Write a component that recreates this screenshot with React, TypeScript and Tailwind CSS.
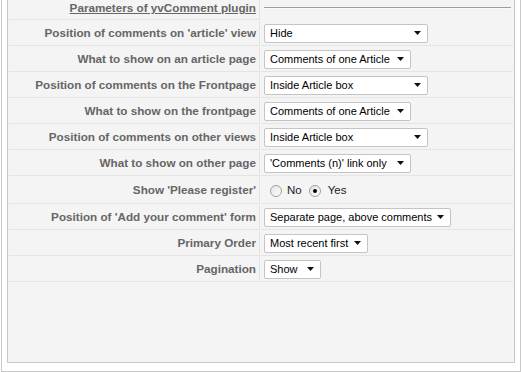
import React from 'react';

type Row =
  | { label: string; kind: 'select'; value: string; width: number }
  | { label: string; kind: 'radio' };

const rows: Row[] = [
  { label: "Position of comments on 'article' view", kind: 'select', value: 'Hide', width: 164 },
  { label: 'What to show on an article page', kind: 'select', value: 'Comments of one Article', width: 147 },
  { label: 'Position of comments on the Frontpage', kind: 'select', value: 'Inside Article box', width: 164 },
  { label: 'What to show on the frontpage', kind: 'select', value: 'Comments of one Article', width: 147 },
  { label: 'Position of comments on other views', kind: 'select', value: 'Inside Article box', width: 164 },
  { label: 'What to show on other page', kind: 'select', value: "'Comments (n)' link only", width: 147 },
  { label: "Show 'Please register'", kind: 'radio' },
  { label: "Position of 'Add your comment' form", kind: 'select', value: 'Separate page, above comments', width: 187 },
  { label: 'Primary Order', kind: 'select', value: 'Most recent first', width: 104 },
  { label: 'Pagination', kind: 'select', value: 'Show', width: 57 },
];

function FakeSelect({ value, width }: { value: string; width: number }) {
  return (
    <div
      className="h-[19px] flex items-center justify-between bg-white border border-[#c4c4c4] rounded-[2px] pl-[5px] pr-[6px] text-[11px] text-black"
      style={{ width }}
    >
      <span className="whitespace-nowrap">{value}</span>
      <svg width="7" height="4" viewBox="0 0 7 4" className="shrink-0">
        <polygon points="0,0 7,0 3.5,4" fill="#111" />
      </svg>
    </div>
  );
}

function Radio({ checked }: { checked?: boolean }) {
  return (
    <span className="w-[12px] h-[12px] rounded-full border border-[#a0a0a0] bg-gradient-to-br from-[#e2e2e2] to-white flex items-center justify-center">
      {checked && <span className="w-[4px] h-[4px] rounded-full bg-black" />}
    </span>
  );
}

export default function App() {
  return (
    <div className="min-h-screen bg-white" style={{ fontFamily: '"Liberation Sans", Arial, sans-serif' }}>
      <div className="ml-[1px] w-[520px] h-[372px] border-x border-b border-[#c8c8c8] px-[5px] pb-[8px]">
        <div className="h-full border-x border-b border-[#c8c8c8] bg-[#f4f4f4] flex flex-col gap-[1px] px-[1px]">
          {/* header */}
          <div className="flex gap-[1px] h-[20px]">
            <div className="w-[251px] border-b border-r border-[#e4e4e4] flex justify-end items-start pr-[3px] pt-[2px]">
              <span className="text-[11.7px] font-bold text-[#666] underline leading-[12px]">
                Parameters of yvComment plugin
              </span>
            </div>
            <div className="flex-1 pl-[3px] pr-[2px] pt-[7px]">
              <div className="border-t border-[#9e9e9e] border-b border-b-[#fafafa]" />
            </div>
          </div>

          {rows.map((r) => (
            <div key={r.label} className={`flex gap-[1px] ${r.kind === 'radio' ? 'h-[27px]' : 'h-[25px]'}`}>
              <div className="w-[251px] border-b border-r border-[#e4e4e4] flex items-center justify-end pr-[3px]">
                <span className="text-[11.7px] font-bold text-[#666] whitespace-nowrap">{r.label}</span>
              </div>
              <div className="flex-1 border-b border-[#e4e4e4] flex items-center pl-[3px]">
                {r.kind === 'select' ? (
                  <FakeSelect value={r.value} width={r.width} />
                ) : (
                  <div className="flex items-center text-[11.5px] text-[#222] pl-[6px] pt-[2px]">
                    <Radio />
                    <span className="ml-[5px]">No</span>
                    <span className="ml-[7px]">
                      <Radio checked />
                    </span>
                    <span className="ml-[7px]">Yes</span>
                  </div>
                )}
              </div>
            </div>
          ))}
        </div>
      </div>
    </div>
  );
}
